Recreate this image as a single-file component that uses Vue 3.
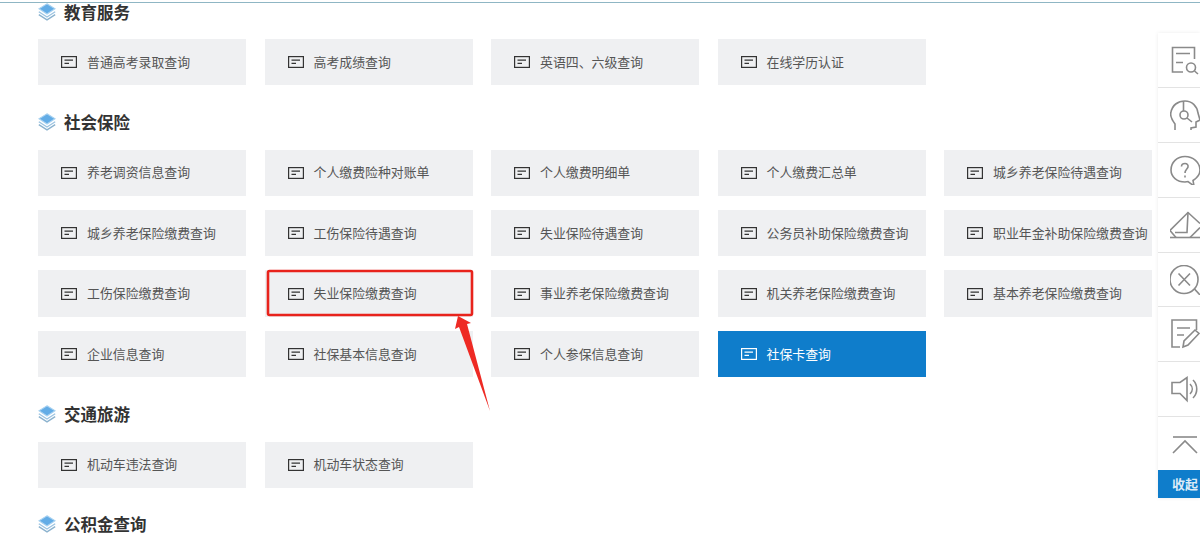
<template>
  <div class="page">
    <div class="top-line"></div>
    <section v-for="group in groups" :key="group.title" class="group">
      <h3 class="group-title">
        <svg class="stack" viewBox="0 0 18 18" width="18" height="18">
          <path d="M.8 11.600 9 16.800 17.200 11.600" fill="none" stroke="#8cb3cf" stroke-width="1.4" />
          <path d="M.8 8.800 9 14 17.200 8.800" fill="none" stroke="#9cc4e2" stroke-width="1.3" />
          <path d="M9 .8 17 5.800 9 11 1 5.800Z" fill="#62ace6" stroke="#a9d2f0" stroke-width="1.1" />
        </svg>
        {{ group.title }}
      </h3>
      <div v-if="group.items.length" class="grid">
        <div v-for="item in group.items" :key="item" class="card" :class="{ active: item === '社保卡查询' }">
          <svg class="doc" viewBox="0 0 16 12" width="16" height="12">
            <rect x="0.6" y="0.6" width="14.8" height="10.8" fill="none" stroke="currentColor" stroke-width="1.2" />
            <path d="M3.5 4.200H12M3.5 7.400H8" fill="none" stroke="currentColor" stroke-width="1.2" />
          </svg>
          <span>{{ item }}</span>
        </div>
      </div>
    </section>

    <svg class="mark" width="1200" height="541" viewBox="0 0 1200 541">
      <rect x="268" y="271" width="204" height="44" rx="1.5" fill="none" stroke="#e8231c" stroke-width="2.6" />
      <path d="M458 316 471 323 467 324 490 411 459 327 455 329Z" fill="#ee2a24" />
    </svg>

    <aside class="side">
      <div class="side-cell" v-for="icon in sideIcons" :key="icon.name">
        <svg viewBox="0 0 30 30" width="30" height="30" fill="none" stroke="#8a8a8a" stroke-width="1.6">
          <path v-for="d in icon.paths" :key="d" :d="d" />
          <circle v-for="c in icon.circles" :key="c[0]" :cx="c[0]" :cy="c[1]" :r="c[2]" />
        </svg>
      </div>
      <div class="side-toggle">收起</div>
    </aside>
  </div>
</template>

<script setup>
const groups = [
  { title: '教育服务', items: ['普通高考录取查询', '高考成绩查询', '英语四、六级查询', '在线学历认证'] },
  {
    title: '社会保险',
    items: [
      '养老调资信息查询', '个人缴费险种对账单', '个人缴费明细单', '个人缴费汇总单', '城乡养老保险待遇查询',
      '城乡养老保险缴费查询', '工伤保险待遇查询', '失业保险待遇查询', '公务员补助保险缴费查询', '职业年金补助保险缴费查询',
      '工伤保险缴费查询', '失业保险缴费查询', '事业养老保险缴费查询', '机关养老保险缴费查询', '基本养老保险缴费查询',
      '企业信息查询', '社保基本信息查询', '个人参保信息查询', '社保卡查询'
    ]
  },
  { title: '交通旅游', items: ['机动车违法查询', '机动车状态查询'] },
  { title: '公积金查询', items: [] }
]

const sideIcons = [
  { name: 'search', paths: ['M24.500 14V2.500H2.500V27H13', 'M6 8.500H20M6 17.500H13', 'M24.500 26 28 29'], circles: [[21, 22.5, 4.5]] },
  { name: 'head', paths: ['M5 31V24C2 20 0 17 .8 13 2 5 8 1 15 1 22 1 27 6 28 13L30 20 26 22V27L21 28V32', 'M13.500 1V11', 'M17 18 22 22'], circles: [[14, 15, 4]] },
  { name: 'help', paths: ['M15 1.500C7 1.500 1 7.500 1 15 1 22 7 27 15 27L18 26.500 24 31 23 25.500C27 23 30 19.500 30 15 30 7.500 23 1.500 15 1.500Z', 'M11.500 11.500C11.500 9.500 13 8.500 15 8.500 17 8.500 18.500 10 18 12 17.500 14 15 14.500 15 18', 'M15 20.500V22.500'], circles: [] },
  { name: 'mail', paths: ['M6 27.500 0 20.500 18 2.500 30 13.500', 'M-1 27.500H30', 'M5 22.500 17 22.500 18 2.500', 'M20 27.500 30 17.500'], circles: [] },
  { name: 'close', paths: ['M8.500 8.500 20 20.500M20 8.500 8.500 20.500', 'M24.500 24 30 30'], circles: [[14, 14.5, 14]] },
  { name: 'edit', paths: ['M26.500 11V1H2V28H10', 'M7 9H20M7 16H14', 'M13 28 14 22 25 11 29 14.500 18 26Z'], circles: [] },
  { name: 'sound', paths: ['M2 8.500H10L17 3.500V26.500L10 19.500H2Z', 'M20 10C23 13 23 17 20 20', 'M23 6C28 11 28 19 23 24'], circles: [] },
  { name: 'up', paths: ['M3 11H27', 'M3 27 15 15 27 27'], circles: [] }
]
</script>

<style scoped>
.page {
  position: relative;
  width: 1200px;
  height: 541px;
  overflow: hidden;
  background: #fff;
  font-family: "Noto Sans CJK SC", "Liberation Sans", sans-serif;
}

.top-line {
  height: 1px;
  margin: 2px 0 -2px;
  background: #8fb6c4;
}

.group {
  padding-left: 38px;
}

.group-title {
  display: flex;
  align-items: center;
  gap: 8px;
  height: 20px;
  margin: 0;
  font-size: 16.5px;
  font-weight: 700;
  color: #333;
}

.group:first-of-type .group-title {
  height: 22px;
  margin-bottom: -2px;
}

.stack {
  flex: none;
}

.grid {
  display: grid;
  grid-template-columns: repeat(5, 208px);
  column-gap: 18.5px;
  row-gap: 14px;
  margin: 18px 0 26.3px;
}

.card {
  display: flex;
  align-items: center;
  gap: 10px;
  height: 46.4px;
  padding-left: 23px;
  background: #eff0f2;
  color: #333;
  white-space: nowrap;
}

.card span {
  padding-bottom: 2px;
  font-size: 12.9px;
  color: #555;
}

.card.active {
  background: #0f7dcb;
  color: #fff;
}

.card.active span {
  color: #fff;
}

.doc {
  flex: none;
}

.mark {
  position: absolute;
  left: 0;
  top: 0;
  pointer-events: none;
}

.side {
  position: absolute;
  left: 1158px;
  top: 33px;
  width: 42px;
  background: #fff;
  box-shadow: 0 0 4px rgba(0, 0, 0, 0.08);
}

.side-cell {
  display: flex;
  align-items: center;
  padding-left: 12px;
  height: 54.9px;
  box-sizing: border-box;
  border-bottom: 1px solid #e3e3e3;
}

.side-cell:nth-child(8) {
  height: 48px;
  border-bottom: 0;
}

.side-toggle {
  margin-top: 5px;
  height: 28px;
  line-height: 27px;
  padding-left: 14px;
  background: #0f7dcb;
  color: #dcebf7;
  font-size: 13px;
  font-weight: 700;
}
</style>
